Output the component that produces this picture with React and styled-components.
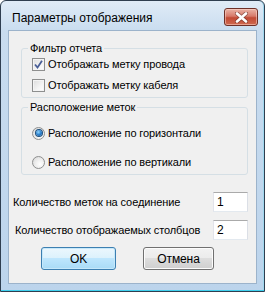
import React from "react";
import styled, { createGlobalStyle } from "styled-components";

const GlobalStyle = createGlobalStyle`
  body {
    margin: 0;
    background: #ffffff;
  }
`;

const Window = styled.div`
  width: 265px;
  height: 292px;
  box-sizing: border-box;
  border: 1px solid #2f3e50;
  border-radius: 6px 6px 0 0;
  background: linear-gradient(to bottom, #e0ebf7 0px, #c9dcef 30px, #bcd4ec 100%);
  box-shadow: inset 0 -1px 0 #3fd0ee, inset -1px 0 0 #9fd8ee;
  display: flex;
  flex-direction: column;
  padding: 0 6px 7px 6px;
  font-family: "Liberation Sans", Arial, sans-serif;
`;

const TitleBar = styled.div`
  height: 29px;
  display: flex;
  align-items: center;
  justify-content: space-between;
  padding: 0 0 0 5px;
`;

const Title = styled.span`
  font-family: "Liberation Sans", Arial, sans-serif;
  font-size: 12px;
  color: #000;
  margin-top: 4px;
`;

const CloseButton = styled.div`
  width: 34px;
  height: 18px;
  margin-top: 3px;
  box-sizing: border-box;
  border: 1px solid #6e3028;
  border-radius: 3px;
  background: linear-gradient(to bottom, #eab3a6 0%, #d77a6a 45%, #c24a35 55%, #cf6a50 100%);
  box-shadow: inset 0 0 0 1px rgba(255, 220, 210, 0.5);
  display: flex;
  align-items: center;
  justify-content: center;
`;

const Client = styled.div`
  flex: 1;
  margin: 0 1px;
  border: 1px solid #9cb3cb;
  background: #f0f0f0;
  display: flex;
  flex-direction: column;
  font-size: 11px;
  letter-spacing: -0.1px;
  color: #000;
`;

const Group = styled.fieldset`
  margin: ${(p) => p.$top}px 8px 0 12px;
  padding: 0;
  border: 1px solid #d5dfe5;
  border-radius: 3px;
  min-width: 0;
`;

const Legend = styled.legend`
  margin-left: 6px;
  padding: 0 2px;
  line-height: 13px;
  font-size: 11px;
`;

const GroupBody = styled.div`
  display: flex;
  flex-direction: column;
  gap: ${(p) => p.$gap}px;
  padding: ${(p) => p.$pt}px 0 3px 10px;
`;

const OptionRow = styled.label`
  height: 18px;
  display: flex;
  align-items: center;
  gap: 3px;
`;

const Box = styled.span`
  width: 13px;
  height: 13px;
  box-sizing: border-box;
  border: 1px solid #8e8f8f;
  background: linear-gradient(135deg, #dcdcdc 0%, #f4f4f4 60%, #ffffff 100%);
  box-shadow: inset 0 0 0 1px #f4f4f4;
  display: flex;
  align-items: center;
  justify-content: center;
`;

const Radio = styled.span`
  width: 13px;
  height: 13px;
  box-sizing: border-box;
  border-radius: 50%;
  border: 1px solid #8e8f8f;
  background: radial-gradient(circle at 65% 65%, #ffffff 0%, #ececec 50%, #d4d4d4 100%);
  display: flex;
  align-items: center;
  justify-content: center;
`;

const RadioDot = styled.span`
  width: 6px;
  height: 6px;
  border-radius: 50%;
  background: radial-gradient(circle at 40% 35%, #8fd6ff 0%, #2a7fcc 50%, #124f92 100%);
  box-shadow: 0 0 0 1px #1d4f7c;
`;

const FieldRow = styled.div`
  height: 20px;
  margin: ${(p) => p.$top}px 8px 0 ${(p) => p.$left}px;
  display: flex;
  align-items: center;
  justify-content: space-between;
`;

const Input = styled.div`
  width: 35px;
  height: 20px;
  box-sizing: border-box;
  border: 1px solid #abadb3;
  border-top-color: #aaaaaa;
  border-left-color: #e2e3ea;
  border-bottom-color: #e3e9ef;
  border-right-color: #dbdfe6;
  background: #ffffff;
  padding: 3px 0 0 3px;
  font-size: 12px;
  line-height: 13px;
`;

const Buttons = styled.div`
  margin: 7px 0 0 32px;
  display: flex;
  gap: 27px;
`;

const Button = styled.div`
  width: ${(p) => p.$w}px;
  height: 23px;
  box-sizing: border-box;
  border: 1px solid ${(p) => (p.$primary ? "#3c7fb1" : "#707070")};
  border-radius: 3px;
  background: ${(p) =>
    p.$primary
      ? "linear-gradient(to bottom, #ecf7fd 0%, #dbf1fc 50%, #bee6fd 50%, #a9dbf6 100%)"
      : "linear-gradient(to bottom, #f2f2f2 0%, #ebebeb 50%, #dddddd 50%, #cfcfcf 100%)"};
  box-shadow: inset 0 0 0 1px ${(p) => (p.$primary ? "#c6e8fa" : "#fcfcfc")};
  display: flex;
  align-items: center;
  justify-content: center;
  font-size: 12px;
`;

const CheckMark = () => (
  <svg width="9" height="9" viewBox="0 0 9 9">
    <path d="M1 4.5 L3.5 7.5 L8 0.8" fill="none" stroke="#4a5f97" strokeWidth="1.8" />
  </svg>
);

const CloseGlyph = () => (
  <svg width="13" height="11" viewBox="0 0 13 11">
    <path
      d="M2 1.5 L11 9.5 M11 1.5 L2 9.5"
      stroke="#5a2a24"
      strokeWidth="4.2"
      strokeLinecap="round"
      opacity="0.55"
    />
    <path d="M2 1.5 L11 9.5 M11 1.5 L2 9.5" stroke="#ffffff" strokeWidth="2.6" strokeLinecap="round" />
  </svg>
);

const App = () => {
  return (
    <>
      <GlobalStyle />
      <Window>
        <TitleBar>
          <Title>Параметры отображения</Title>
          <CloseButton>
            <CloseGlyph />
          </CloseButton>
        </TitleBar>
        <Client>
          <Group $top={11}>
            <Legend>Фильтр отчета</Legend>
            <GroupBody $gap={3} $pt={0}>
              <OptionRow>
                <Box>
                  <CheckMark />
                </Box>
                Отображать метку провода
              </OptionRow>
              <OptionRow>
                <Box />
                Отображать метку кабеля
              </OptionRow>
            </GroupBody>
          </Group>
          <Group $top={3}>
            <Legend>Расположение меток</Legend>
            <GroupBody $gap={11} $pt={10}>
              <OptionRow>
                <Radio>
                  <RadioDot />
                </Radio>
                Расположение по горизонтали
              </OptionRow>
              <OptionRow>
                <Radio />
                Расположение по вертикали
              </OptionRow>
            </GroupBody>
          </Group>
          <FieldRow $top={17} $left={4}>
            <span>Количество меток на соединение</span>
            <Input>1</Input>
          </FieldRow>
          <FieldRow $top={8} $left={6}>
            <span>Количество отображаемых столбцов</span>
            <Input>2</Input>
          </FieldRow>
          <Buttons>
            <Button $primary $w={75}>
              OK
            </Button>
            <Button $w={71}>Отмена</Button>
          </Buttons>
        </Client>
      </Window>
    </>
  );
};

export default App;
